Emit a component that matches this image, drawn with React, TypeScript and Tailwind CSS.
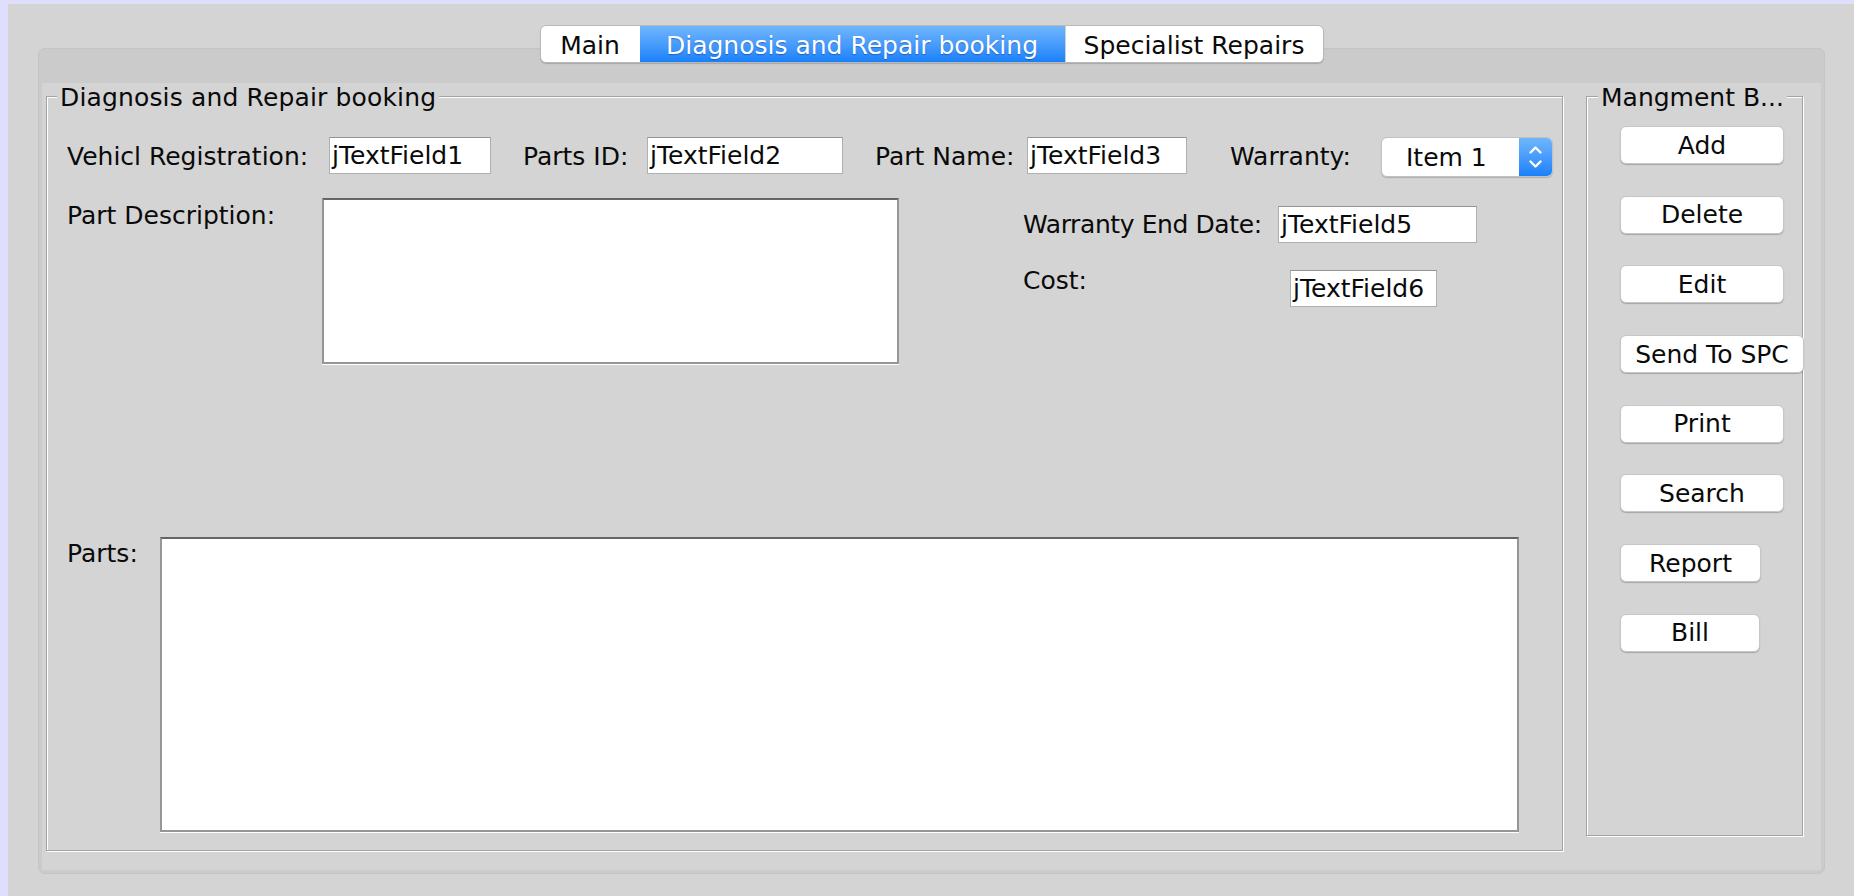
import React from "react";

function Field({ cls, text }: { cls: string; text: string }) {
  return (
    <div
      className={`h-[37px] shrink-0 bg-white border border-[#b0b0b0] border-t-[#949494] flex items-center pl-[2px] overflow-hidden whitespace-nowrap ${cls}`}
    >
      {text}
    </div>
  );
}

function Btn({ cls, text }: { cls: string; text: string }) {
  return (
    <div
      className={`h-[38px] shrink-0 rounded-[6px] bg-white border border-[#c6c6c6] shadow-[0_1px_1px_rgba(0,0,0,0.22)] flex items-center justify-center whitespace-nowrap ${cls}`}
    >
      {text}
    </div>
  );
}

export default function App() {
  return (
    <div className="w-[1854px] h-[896px] bg-[#dfdffd] pt-[4px] pl-[8px] font-['DejaVu_Sans',sans-serif] text-[25px] leading-[29px] text-[#0a0a0a] overflow-hidden">
      <div className="w-full h-full bg-[#d4d4d4] pt-[21px] pl-[30px] flex flex-col">
        {/* Tabs */}
        <div className="relative z-10 w-[1787px] flex justify-center">
          <div className="flex h-[38px] rounded-[6px] border border-[#b9b9b9] bg-white shadow-[0_1px_1px_rgba(0,0,0,0.18)] overflow-hidden">
            <div className="w-[99px] flex items-center justify-center pt-[2px]">Main</div>
            <div className="w-[425px] flex items-center justify-center pt-[2px] text-white bg-gradient-to-b from-[#6fb6fc] to-[#1780fb] [text-shadow:0_1px_1px_rgba(0,20,90,0.35)]">
              Diagnosis and Repair booking
            </div>
            <div className="w-[258px] flex items-center justify-center pt-[2px] border-l border-[#d0d0d0]">
              Specialist Repairs
            </div>
          </div>
        </div>

        {/* Pane */}
        <div className="-mt-[15px] w-[1787px] h-[826px] rounded-[7px] border border-[#c4c4c4] bg-[#cbcbcb] px-[3px] pb-[3px] pt-[34px] flex">
          <div className="flex-1 bg-[#d4d4d4] pl-[4px] pt-[13px] flex items-start">
            {/* Left titled group */}
            <div className="relative w-[1517px] h-[755px] shrink-0 border border-[#a3a3a3] shadow-[1px_1px_0_#fff,inset_1px_1px_0_#fff] pl-[20px] pt-[40px]">
              <span className="absolute left-[10px] top-[-14px] px-[3px] bg-[#d4d4d4] whitespace-nowrap tracking-[0.15px]">
                Diagnosis and Repair booking
              </span>

              {/* Row 1 */}
              <div className="flex items-start h-[39px]">
                <div className="w-[262px] h-[37px] flex items-center pt-[2px] whitespace-nowrap">Vehicl Registration:</div>
                <Field cls="w-[162px]" text="jTextField1" />
                <div className="ml-[32px] w-[124px] h-[37px] flex items-center pt-[2px] whitespace-nowrap">Parts ID:</div>
                <Field cls="w-[196px]" text="jTextField2" />
                <div className="ml-[32px] w-[152px] h-[37px] flex items-center pt-[2px] whitespace-nowrap">Part Name:</div>
                <Field cls="w-[160px]" text="jTextField3" />
                <div className="ml-[43px] w-[151px] h-[37px] flex items-center pt-[2px] whitespace-nowrap">Warranty:</div>
                <div className="w-[172px] h-[40px] flex rounded-[6px] border border-[#c2c2c2] shadow-[0_1px_1px_rgba(0,0,0,0.18)] overflow-hidden bg-white">
                  <div className="flex-1 flex items-center pl-[24px]">Item 1</div>
                  <div className="w-[33px] bg-gradient-to-b from-[#6fb6fc] to-[#1780fb] flex items-center justify-center">
                    <svg width="33" height="40" viewBox="0 0 33 40">
                      <polyline points="11.5,15.5 16.5,10.5 21.5,15.5" fill="none" stroke="#fff" strokeWidth="2.4" strokeLinecap="round" strokeLinejoin="round" />
                      <polyline points="11.5,24.5 16.5,29.5 21.5,24.5" fill="none" stroke="#fff" strokeWidth="2.4" strokeLinecap="round" strokeLinejoin="round" />
                    </svg>
                  </div>
                </div>
              </div>

              {/* Row 2 */}
              <div className="mt-[22px] flex items-start">
                <div className="w-[255px] pt-[3px] whitespace-nowrap">Part Description:</div>
                <div className="w-[577px] h-[166px] shrink-0 bg-white border-2 border-[#969696] border-t-[#656565] shadow-[0_1px_0_#fff]" />
                <div className="ml-[124px] flex flex-col pt-[8px]">
                  <div className="flex items-center">
                    <div className="w-[255px] whitespace-nowrap tracking-[-0.4px]">Warranty End Date:</div>
                    <Field cls="w-[199px]" text="jTextField5" />
                  </div>
                  <div className="mt-[27px] flex items-start">
                    <div className="w-[267px] -mt-[4px] whitespace-nowrap">Cost:</div>
                    <Field cls="w-[147px]" text="jTextField6" />
                  </div>
                </div>
              </div>

              {/* Parts row */}
              <div className="mt-[173px] flex items-start">
                <div className="w-[93px] pt-[2px] whitespace-nowrap">Parts:</div>
                <div className="w-[1359px] h-[295px] shrink-0 bg-white border-2 border-[#969696] border-t-[#656565] shadow-[0_1px_0_#fff]" />
              </div>
            </div>

            {/* Right titled group */}
            <div className="relative ml-[23px] w-[217px] h-[740px] shrink-0 border border-[#a3a3a3] shadow-[1px_1px_0_#fff,inset_1px_1px_0_#fff] pl-[33px] pt-[29px] flex flex-col gap-[31.7px]">
              <span className="absolute left-[11px] top-[-14px] px-[3px] bg-[#d4d4d4] whitespace-nowrap">
                Mangment B...
              </span>
              <Btn cls="w-[164px]" text="Add" />
              <Btn cls="w-[164px]" text="Delete" />
              <Btn cls="w-[164px]" text="Edit" />
              <Btn cls="w-[184px] relative z-10" text="Send To SPC" />
              <Btn cls="w-[164px]" text="Print" />
              <Btn cls="w-[164px]" text="Search" />
              <Btn cls="w-[141px]" text="Report" />
              <Btn cls="w-[140px]" text="Bill" />
            </div>
          </div>
        </div>
      </div>
    </div>
  );
}
